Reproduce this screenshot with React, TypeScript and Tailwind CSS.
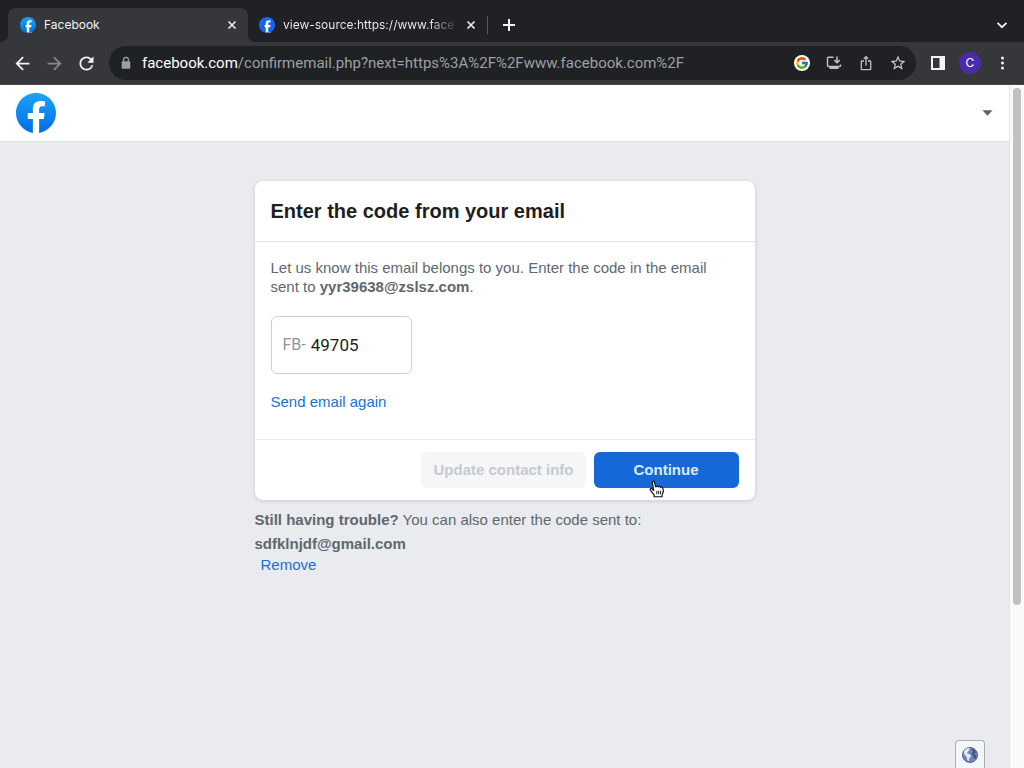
import React from "react";
import { FcGoogle } from "react-icons/fc";
import { MdArrowBack, MdArrowForward, MdRefresh, MdStarBorder, MdMoreVert, MdIosShare } from "react-icons/md";

function FacebookLogo({ className, id, flat = false }: { className: string; id: string; flat?: boolean }) {
  return (
    <svg viewBox="0 0 24 24" className={className} aria-hidden="true">
      <defs>
        <linearGradient id={id} x1="0" y1="0" x2="0" y2="1">
          <stop offset="0" stopColor={flat ? "#1566f0" : "#19a5f5"} />
          <stop offset="1" stopColor={flat ? "#1566f0" : "#056be8"} />
        </linearGradient>
      </defs>
      <path d="M6.5 4h11.500v19.200H10z" fill="#fff" />
      <path
        fill={`url(#${id})`}
        d="M24 12.073c0-6.627-5.373-12-12-12s-12 5.373-12 12c0 5.990 4.388 10.954 10.125 11.854v-8.385H7.078v-3.470h3.047V9.430c0-3.007 1.792-4.669 4.533-4.669 1.312 0 2.686.235 2.686.235v2.953H15.830c-1.491 0-1.956.925-1.956 1.874v2.250h3.328l-.532 3.470h-2.796v8.385C19.612 23.027 24 18.062 24 12.073z"
      />
    </svg>
  );
}

function CloseIcon() {
  return (
    <svg viewBox="0 0 16 16" className="size-4" aria-hidden="true">
      <path d="M4.500 4.500l7 7M11.500 4.500l-7 7" stroke="#e8eaed" strokeWidth="1.700" fill="none" />
    </svg>
  );
}

function TabStrip() {
  return (
    <div className="flex h-[42px] items-end bg-[#202124] pl-2 text-xs text-[#f1f3f4]">
      <div className="relative flex h-[34px] w-[240px] items-center gap-2 rounded-t-lg bg-[#36373b] pr-2 pl-3">
        <span className="absolute bottom-0 -left-2 size-2 bg-[radial-gradient(circle_at_0_0,#202124_8px,#36373b_8px)]" />
        <span className="absolute -right-2 bottom-0 size-2 bg-[radial-gradient(circle_at_100%_0,#202124_8px,#36373b_8px)]" />
        <FacebookLogo className="size-4" id="tab-one" />
        <span className="flex-1">Facebook</span>
        <button aria-label="Close Facebook tab">
          <CloseIcon />
        </button>
      </div>
      <div className="flex h-[34px] w-[239px] items-center gap-2 pr-2 pl-[11px]">
        <FacebookLogo className="size-4 shrink-0" id="tab-two" flat />
        <span className="min-w-0 flex-1 whitespace-nowrap bg-linear-to-r from-[#f1f3f4] from-85% to-[#3a3b3f] bg-clip-text text-transparent">
          view-source:https://www.face
        </span>
        <button aria-label="Close view-source tab" className="shrink-0">
          <CloseIcon />
        </button>
      </div>
      <span className="mb-2 h-[18px] w-px bg-[#55585c]" />
      <button aria-label="New tab" className="ml-[11px] flex h-[34px] items-center">
        <svg viewBox="0 0 20 20" className="size-5" aria-hidden="true">
          <path d="M10 4v12M4 10h12" stroke="#f1f3f4" strokeWidth="2" />
        </svg>
      </button>
      <button aria-label="Search tabs" className="mr-3 ml-auto flex h-[34px] items-center">
        <svg viewBox="0 0 20 20" className="size-5" aria-hidden="true">
          <path d="M5.500 7.800l4.500 4.400 4.500-4.400" stroke="#f1f3f4" strokeWidth="1.800" fill="none" />
        </svg>
      </button>
    </div>
  );
}

function ToolButton({ label, children }: { label: string; children: React.ReactNode }) {
  return (
    <button aria-label={label} className="flex size-8 shrink-0 items-center justify-center">
      {children}
    </button>
  );
}

function Toolbar() {
  return (
    <div className="flex h-[43px] items-center border-b border-[#4a4a4d] bg-[#36373b] px-[6px]">
      <ToolButton label="Back">
        <MdArrowBack className="size-[21px] text-[#f1f3f4]" />
      </ToolButton>
      <ToolButton label="Forward">
        <MdArrowForward className="size-[21px] text-[#85868a]" />
      </ToolButton>
      <ToolButton label="Reload">
        <MdRefresh className="size-[21px] text-[#f1f3f4]" />
      </ToolButton>
      <div className="mr-[6px] ml-[7px] flex h-[34px] min-w-0 flex-1 items-center rounded-full bg-[#202124] pr-[2px] pl-[9px]">
        <svg viewBox="0 0 16 16" className="size-4 shrink-0" aria-hidden="true">
          <rect x="3.700" y="6.300" width="8.600" height="7.500" rx=".8" fill="#9aa0a6" />
          <path d="M5.600 6.500V4.700a2.400 2.400 0 0 1 4.800 0v1.800" fill="none" stroke="#9aa0a6" strokeWidth="1.300" />
        </svg>
        <div className="ml-2 min-w-0 flex-1 font-[Roboto,sans-serif] text-[15px] whitespace-nowrap text-[#9aa0a6]">
          <span className="text-white">facebook.com</span>/confirmemail.php?next=https%3A%2F%2Fwww.facebook.com%2F
        </div>
        <ToolButton label="Search with Google">
          <span className="flex size-4 items-center justify-center rounded-full bg-white">
            <FcGoogle className="size-[14px]" />
          </span>
        </ToolButton>
        <ToolButton label="Install app">
          <svg viewBox="0 0 16 16" className="size-4" aria-hidden="true">
            <path d="M7.500 2.300H2.200a.7.700 0 0 0-.7.700v7.800c0 .4.300.7.700.7h11.600c.4 0 .7-.3.700-.7V9.500" fill="none" stroke="#bdc1c6" strokeWidth="1.400" />
            <path d="M3.500 11h9v3h-9z" fill="#bdc1c6" />
            <path d="M11 1.500v6M8.300 5.100 11 7.800l2.700-2.700" fill="none" stroke="#bdc1c6" strokeWidth="1.500" />
          </svg>
        </ToolButton>
        <ToolButton label="Share">
          <MdIosShare className="size-4 text-[#bdc1c6]" />
        </ToolButton>
        <ToolButton label="Bookmark">
          <MdStarBorder className="size-[18px] text-[#c9ccd0]" />
        </ToolButton>
      </div>
      <ToolButton label="Side panel">
        <svg viewBox="0 0 16 16" className="size-4" aria-hidden="true">
          <rect x="1" y="1" width="14" height="14" fill="#f1f3f4" />
          <rect x="3" y="3" width="6.500" height="10" fill="#36373b" />
        </svg>
      </ToolButton>
      <ToolButton label="Profile">
        <span className="flex size-[22px] items-center justify-center rounded-full bg-[#4b2ca8] text-xs text-white">
          C
        </span>
      </ToolButton>
      <ToolButton label="Menu">
        <svg viewBox="0 0 16 16" className="size-4" aria-hidden="true" fill="#f1f3f4">
          <circle cx="8.500" cy="3" r="1.500" />
          <circle cx="8.500" cy="8" r="1.500" />
          <circle cx="8.500" cy="13" r="1.500" />
        </svg>
      </ToolButton>
    </div>
  );
}

function HandCursor() {
  return (
    <svg viewBox="0 0 16 17" className="absolute top-7 left-[54px] h-[18px] w-[17px]" aria-hidden="true">
      <path
        d="M5.800 15.800V14.200L2.200 9.600C1.500 8.500 2.700 7.500 3.700 8.300L5.400 9.900 4.100 2.600C3.800.9 5.500.6 6 2.100L7.300 6.500C7.900 5.400 9.200 5.500 9.600 6.600 10.400 5.700 11.500 5.900 11.900 7 12.900 6.300 13.900 7 14.100 8.200L14.500 11 13.300 13.800V15.800z"
        fill="#fff"
        stroke="#111"
        strokeWidth="1.100"
        strokeLinejoin="round"
      />
      <path d="M8.300 10.200v3.300M10.100 10.200v3.300M11.900 10.200v3.300" stroke="#111" strokeWidth=".9" />
    </svg>
  );
}

function GlobeIcon() {
  return (
    <svg viewBox="0 0 18 18" className="size-[18px]" aria-hidden="true">
      <circle cx="9" cy="9" r="7.500" fill="#6f86ba" stroke="#566591" />
      <path
        d="M2.800 5.800 5 3l3-1.200.9 1-1.300 1 .6 1L6.500 6 6 7.400l1.500.4 2.600 1.500-.6 1.700-1.300 1.600-.4 2.700-1.700-1.700-.3-2.800L3.600 9z"
        fill="#e3ebf6"
      />
      <path d="M11 2.500l3 1.800 1.400 2.400-1.300-.3-.8 1.200.6 1.400 1.700.4-.7 2.300-1.400 1.500-.7-2.200-.8-1.700-1.200-.9.5-1.800.9-1.200-1.200-1.300z" fill="#3f5288" />
    </svg>
  );
}

function CodeCard() {
  return (
    <form
      className="rounded-lg bg-white shadow-[0_1px_4px_rgba(0,0,0,0.14)]"
      onSubmit={(event) => event.preventDefault()}
    >
      <h1 className="border-b border-[#e0e2e5] px-4 py-[18px] text-xl leading-6 font-bold text-[#1c1e21]">
        Enter the code from your email
      </h1>
      <div className="px-4 pt-4 pb-7 text-[15px] leading-[19px] text-[#606770]">
        <p>
          Let us know this email belongs to you. Enter the code in the email sent to <b>yyr39638@zslsz.com</b>.
        </p>
        <label className="mt-5 flex h-[58px] w-[141px] items-center gap-[5px] rounded-md border border-[#ccd0d5] px-[11px] font-[Roboto,sans-serif]">
          <span className="text-base text-[#90949c]">FB-</span>
          <input
            type="text"
            aria-label="Confirmation code"
            defaultValue="49705"
            className="w-full min-w-0 text-[17px] text-[#1c1e21] outline-none"
          />
        </label>
        <a href="#resend" className="mt-[18px] inline-block text-[#1b70d8]">
          Send email again
        </a>
      </div>
      <div className="flex justify-end gap-2 border-t border-[#e9ebee] px-4 py-3 text-[15px] font-bold">
        <button type="button" disabled className="h-9 rounded-md bg-[#f5f6f7] px-3 text-[#c6cacf]">
          Update contact info
        </button>
        <div className="relative">
          <button type="submit" className="h-9 w-[145px] rounded-md bg-[#1668d9] text-[#dcebfb]">
            Continue
          </button>
          <HandCursor />
        </div>
      </div>
    </form>
  );
}

export default function App() {
  return (
    <div className="flex min-h-screen flex-col font-[Inter,sans-serif]">
      <TabStrip />
      <Toolbar />
      <div className="flex flex-1 font-['Liberation_Sans',Arial,sans-serif]">
        <div className="relative flex min-w-0 flex-1 flex-col bg-[#e9ebee]">
          <header className="flex h-[57px] items-center justify-between border-b border-[#dddfe2] bg-white px-4">
            <a href="#home" aria-label="Facebook">
              <FacebookLogo className="size-10" id="brand" />
            </a>
            <button aria-label="Account menu">
              <svg viewBox="0 0 12 6" className="h-[6px] w-[11px]" aria-hidden="true">
                <path d="M.5 0h11L6 6z" fill="#606266" />
              </svg>
            </button>
          </header>
          <main className="mx-auto mt-[39px] w-full max-w-[500px] text-[15px] text-[#606770]">
            <CodeCard />
            <p className="mt-2 leading-6">
              <b>Still having trouble?</b> You can also enter the code sent to:
            </p>
            <p className="leading-6 font-bold">sdfklnjdf@gmail.com</p>
            <a href="#remove" className="block px-[6px] leading-[18px] text-[#1b70d8]">
              Remove
            </a>
          </main>
          <button
            aria-label="Language"
            className="absolute right-6 bottom-0 flex h-7 w-[30px] items-center justify-center rounded-t-sm border border-b-0 border-[#a9adb5] bg-[#f3f6fa]"
          >
            <GlobeIcon />
          </button>
        </div>
        <div className="w-[15px] border-l border-[#e4e4e4] bg-[#fafafa] px-[3px] pt-[3px]">
          <div className="h-[76%] rounded-full bg-[#c1c1c1]" />
        </div>
      </div>
    </div>
  );
}
